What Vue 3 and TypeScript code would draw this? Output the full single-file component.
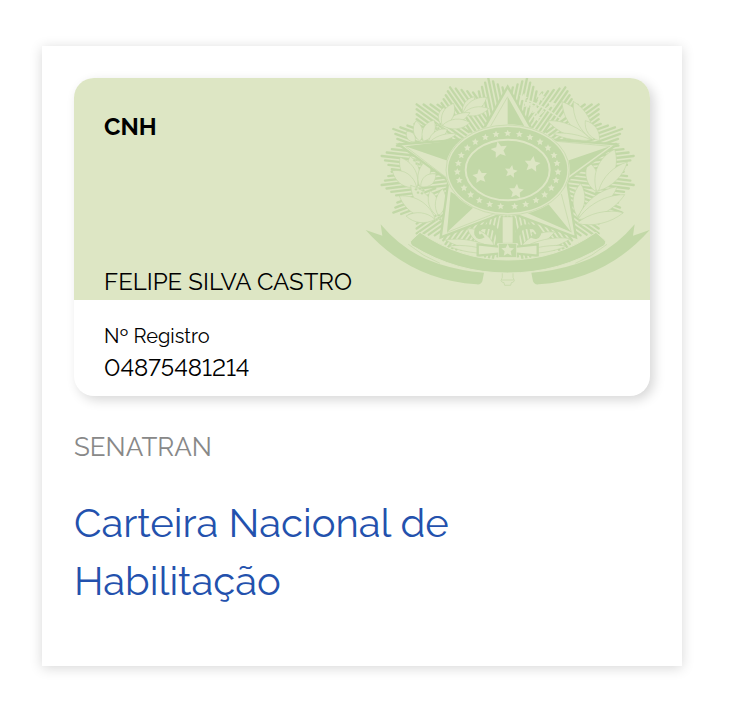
<script setup lang="ts">
type Point = [number, number]
type Leaf = [number, number, number, number, number]

const holder = 'FELIPE SILVA CASTRO'
const registry = '04875481214'

const cx = 443
const cy = 300

function mirror(points: Point[]): Point[] {
  return points.map(([x, y]): Point => [cx * 2 - x, y])
}

// Outline of the sunburst, alternating valley and tip, from top to bottom.
const leftOutline: Point[] = [
  [443, 62], [385, 25], [352, 70], [270, 52], [242, 104], [170, 103],
  [170, 160], [100, 177], [118, 222], [65, 258], [98, 301], [65, 345],
  [118, 383], [100, 428], [170, 440], [170, 490], [242, 498], [270, 545],
  [352, 530], [385, 572], [443, 545],
]

function rays(outline: Point[]): string {
  let d = ''
  for (let i = 1; i < outline.length; i += 2) {
    const [tx, ty] = outline[i]
    const tipLength = Math.hypot(tx - cx, ty - cy)
    const ux = (tx - cx) / tipLength
    const uy = (ty - cy) / tipLength
    for (const valley of [outline[i - 1], outline[i + 1]]) {
      const vx = valley[0] - cx
      const vy = valley[1] - cy
      const along = vx * ux + vy * uy
      const across = vy * ux - vx * uy
      const reach = Math.abs(across)
      const sign = Math.sign(across)
      for (let k = 0; k < reach; k += 12) {
        const t = k / reach
        const start = Math.max(t * along, 120)
        const end = tipLength + (along - tipLength) * t
        if (end <= start) continue
        const ox = cx - uy * k * sign
        const oy = cy + ux * k * sign
        d += `M${(ox + ux * start).toFixed(1)} ${(oy + uy * start).toFixed(1)}`
        d += `L${(ox + ux * end).toFixed(1)} ${(oy + uy * end).toFixed(1)}`
      }
    }
  }
  return d
}

const sunburst = rays(leftOutline) + rays(mirror(leftOutline))

const leaves: Leaf[] = [
  // coffee branch
  [308, 132, 343, 80, 14], [308, 132, 380, 82, 17], [308, 132, 386, 116, 13],
  [247, 168, 330, 128, 13], [245, 166, 252, 112, 14], [247, 168, 281, 100, 17], [247, 166, 330, 158, 15],
  [165, 216, 140, 184, 12], [180, 214, 168, 152, 14], [190, 214, 222, 150, 18], [206, 213, 262, 178, 14], [212, 213, 290, 192, 9],
  [172, 350, 150, 258, 18], [172, 350, 120, 262, 20], [170, 352, 97, 302, 19], [180, 352, 206, 266, 18], [182, 350, 228, 312, 16],
  [228, 440, 152, 346, 20], [225, 445, 118, 378, 22], [225, 448, 138, 438, 15], [232, 438, 210, 362, 15], [236, 438, 248, 356, 16],
  // tobacco branch
  [690, 208, 606, 95, 22], [692, 208, 562, 152, 16], [700, 210, 640, 94, 19], [718, 212, 676, 152, 15], [694, 210, 576, 190, 8],
  [706, 364, 686, 276, 18], [710, 364, 764, 238, 27], [716, 362, 802, 276, 16],
  [652, 440, 662, 340, 18], [654, 442, 772, 350, 20], [654, 448, 794, 374, 20], [650, 460, 790, 428, 17],
  // around the hilt
  [404, 530, 322, 476, 17], [404, 538, 256, 510, 13], [400, 548, 266, 528, 9],
  [482, 530, 584, 486, 15], [482, 538, 632, 506, 14], [486, 548, 620, 528, 9],
]

function leafPath([x1, y1, x2, y2, w]: Leaf): string {
  const length = Math.hypot(x2 - x1, y2 - y1)
  const nx = (-(y2 - y1) / length) * w * 1.3
  const ny = ((x2 - x1) / length) * w * 1.3
  const at = (t: number, s: number) =>
    `${(x1 + (x2 - x1) * t + nx * s).toFixed(1)} ${(y1 + (y2 - y1) * t + ny * s).toFixed(1)}`
  return `M${x1} ${y1}C${at(0.3, 1)} ${at(0.7, 1)} ${x2} ${y2}C${at(0.7, -1)} ${at(0.3, -1)} ${x1} ${y1}Z`
}

function star(x: number, y: number, r: number, turn = 0): string {
  const points: string[] = []
  for (let i = 0; i < 10; i++) {
    const radius = i % 2 === 0 ? r : r * 0.48
    const a = ((i * 36 - 90 + turn) * Math.PI) / 180
    points.push(`${(x + radius * Math.cos(a)).toFixed(1)},${(y + radius * Math.sin(a)).toFixed(1)}`)
  }
  return points.join(' ')
}

const rightStars: Point[] = [
  [478, 193], [510, 202], [540, 216], [564, 234], [582, 256], [591, 280], [594, 306],
  [588, 331], [574, 354], [554, 374], [528, 391], [497, 403], [464, 409],
]
const ringStars: Point[] = [[443, 190], ...rightStars, ...mirror(rightStars)]

const skyStars: [number, number, number, number][] = [
  [418, 240, 26, -12], [517, 283, 25, 8], [360, 319, 23, -8], [453, 305, 20, 10], [469, 364, 23, 5],
]

const flowers: Point[] = [[490, 83], [502, 102], [542, 82], [575, 103], [526, 120], [530, 143]]
const berries: Point[] = [
  [230, 166], [241, 162], [235, 175], [246, 174], [163, 271], [175, 268], [170, 281], [182, 279],
  [168, 358], [180, 356], [190, 361], [174, 368], [186, 370], [226, 438], [237, 436], [230, 449], [241, 448],
]
</script>

<template>
  <main class="page">
    <article class="card">
      <section class="document" aria-label="CNH">
        <div class="cover">
          <svg class="emblem" viewBox="15 24 855 624" aria-hidden="true">
            <path class="ray" :d="sunburst" />
            <g class="leaf">
              <path v-for="(leaf, i) in leaves" :key="i" :d="leafPath(leaf)" />
              <path class="vein" d="M500 90Q550 108 600 145M502 102L526 110M542 82L534 103M575 103L558 116M526 120L542 112M530 143L552 122" />
            </g>
            <polygon v-for="([x, y], i) in flowers" :key="'f' + i" class="light" :points="star(x, y, 14, 12)" />
            <circle v-for="([x, y], i) in berries" :key="'b' + i" class="berry" :cx="x" :cy="y" r="4" />

            <path class="star-edge" d="M443 50L531 205L770 223L621 332L648 502L443 425L242 502L265 332L116 223L355 205Z" />
            <path class="dark" d="M443 80V190H505ZM136 229L325 206L265 273ZM750 229L605 278L618 324ZM272 365L345 408L261 487ZM500 428L565 402L634 487Z" />
            <path class="crease" d="M443 80L385 180M136 229L262 325M750 229L570 212M261 487L405 430M634 487L604 372" />

            <path class="scroll" d="M426 520V445M460 520V445M415 520Q418 470 385 470Q345 468 350 492Q356 506 370 496M471 520Q468 470 501 470Q541 468 536 492Q530 506 516 496" />
            <path class="thin" d="M427 520V440H459V520ZM427 606V622L423 632Q425 638 432 638L434 646H452L454 638Q461 638 463 632L459 622V606ZM425 630H461" />

            <ellipse class="light" :cx="cx" :cy="cy" rx="187" ry="137" />
            <ellipse class="thin" :cx="cx" :cy="cy" rx="185" ry="135" />
            <ellipse class="dark" :cx="cx" :cy="cy" rx="179" ry="129" />
            <ellipse class="ring" :cx="cx" :cy="cy" rx="126" ry="91" />
            <polygon v-for="([x, y], i) in ringStars" :key="'r' + i" class="light" :points="star(x, y, 11)" />
            <polygon v-for="([x, y, r, turn], i) in skyStars" :key="'s' + i" class="light" :points="star(x, y, r, turn)" />

            <path class="guard" d="M353 523L416 530H470L533 523V557L470 551H416L353 557Z" />
            <rect class="guard-center" x="416" y="520" width="54" height="42" />
            <polygon class="light" :points="star(443, 541, 20)" />

            <path class="ribbon" d="M180 487Q300 570 443 570Q590 570 708 487L734 510Q742 519 730 528Q600 609 443 609Q290 609 158 528Q146 519 155 510Z" />
            <g v-for="side in [0, 1]" :key="side" :transform="side ? 'translate(886 0) scale(-1 1)' : undefined">
              <path class="dark" d="M17 480L67 497L62 463Q135 550 235 581Q300 602 372 608L367 634Q363 645 350 643Q150 630 17 480Z" />
              <path class="crease" d="M145 523Q190 560 240 580" />
            </g>
          </svg>
          <strong class="kind">CNH</strong>
          <span class="holder">{{ holder }}</span>
        </div>
        <dl class="registry">
          <dt>Nº Registro</dt>
          <dd>{{ registry }}</dd>
        </dl>
      </section>
      <p class="issuer">SENATRAN</p>
      <h1 class="title">Carteira Nacional de Habilitação</h1>
    </article>
  </main>
</template>

<style>
body {
  margin: 0;
  background: #fff;
}
</style>

<style scoped>
.page {
  padding: 46px 52px 40px 42px;
  font-family: Raleway, Lato, "Open Sans", sans-serif;
  font-variant-numeric: lining-nums;
  color: #000;
}

.card {
  padding: 32px 32px 56px;
  background: #fff;
  box-shadow: 0 2px 12px rgba(0, 0, 0, 0.16);
}

.document {
  overflow: hidden;
  border-radius: 20px;
  background: #fff;
  box-shadow: 4px 4px 12px rgba(0, 0, 0, 0.16);
}

.cover {
  position: relative;
  box-sizing: border-box;
  min-height: 222px;
  padding: 33px 30px 2px;
  display: flex;
  flex-direction: column;
  justify-content: space-between;
  background: #dde6c4;
  font-size: 24px;
  line-height: 32px;
}

.emblem {
  position: absolute;
  top: 0;
  right: 0;
  width: 285px;
  height: 208px;
}

.kind,
.holder {
  position: relative;
}

.kind {
  font-weight: 700;
}

.registry {
  margin: 0;
  padding: 20px 30px 12px;
}

.registry dt {
  font-size: 20px;
  line-height: 32px;
}

.registry dd {
  margin: 0;
  font-size: 24px;
  line-height: 32px;
}

.issuer {
  margin: 32px 0 28px;
  font-size: 26px;
  line-height: 38px;
  color: #888;
}

.title {
  margin: 0;
  font-size: 40px;
  font-weight: 400;
  line-height: 58px;
  color: #2351ad;
}

.ray {
  fill: none;
  stroke: #c2d8a7;
  stroke-width: 7;
  stroke-linecap: round;
}

.leaf path {
  fill: #dde6c4;
  stroke: #c2d8a7;
  stroke-width: 2;
}

.leaf .vein {
  fill: none;
  stroke: #dde6c4;
  stroke-width: 4;
}

.light {
  fill: #dde6c4;
}

.dark {
  fill: #c2d8a7;
}

.berry {
  fill: #c2d8a7;
  stroke: #dde6c4;
  stroke-width: 1;
}

.star-edge {
  fill: #dde6c4;
  stroke: #c2d8a7;
  stroke-width: 7;
}

.crease {
  fill: none;
  stroke: #c2d8a7;
  stroke-width: 2;
}

.scroll {
  fill: none;
  stroke: #c2d8a7;
  stroke-width: 14;
}

.thin {
  fill: #dde6c4;
  stroke: #c2d8a7;
  stroke-width: 2;
}

.ring {
  fill: none;
  stroke: #dde6c4;
  stroke-width: 6;
}

.guard {
  fill: #dde6c4;
  stroke: #c2d8a7;
  stroke-width: 7;
}

.guard-center {
  fill: #c2d8a7;
  stroke: #dde6c4;
  stroke-width: 2;
}

.ribbon {
  fill: #c2d8a7;
  stroke: #dde6c4;
  stroke-width: 3;
}
</style>
